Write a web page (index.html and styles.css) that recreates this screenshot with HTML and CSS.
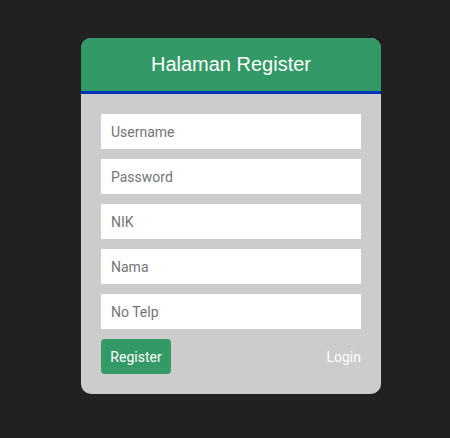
FILE: index.html
```html
<!DOCTYPE html>
<html>
<head>
<meta charset="utf-8">
<link rel="stylesheet" href="styles.css">
</head>
<body>
<div class="card">
  <div class="card-header">Halaman Register</div>
  <form class="card-body">
    <input class="field" type="text" placeholder="Username">
    <input class="field" type="password" placeholder="Password">
    <input class="field" type="text" placeholder="NIK">
    <input class="field" type="text" placeholder="Nama">
    <input class="field" type="text" placeholder="No Telp">
    <div class="actions">
      <button class="btn" type="button">Register</button>
      <a class="login" href="#">Login</a>
    </div>
  </form>
</div>
</body>
</html>
```
FILE: styles.css
```css
html, body {
  margin: 0;
  padding: 0;
}
body {
  background: #212121;
  width: 450px;
  height: 438px;
  font-family: "Liberation Sans", Arial, sans-serif;
  display: flex;
  justify-content: center;
  align-items: flex-start;
  padding-top: 38px;
  box-sizing: border-box;
}
.card {
  width: 300px;
  background: #cccccc;
  border-radius: 10px;
  overflow: hidden;
  margin-left: 12px;
}
.card-header {
  background: #339966;
  color: #ffffff;
  font-size: 20px;
  height: 53px;
  line-height: 52px;
  text-align: center;
  border-bottom: 3px solid #0033bb;
}
.card-body {
  margin: 0;
  padding: 20px;
  display: flex;
  flex-direction: column;
  gap: 10px;
}
.field {
  height: 35px;
  box-sizing: border-box;
  border: none;
  outline: none;
  padding: 0 10px;
  font-family: Roboto, "Liberation Sans", sans-serif;
  font-size: 14px;
  background: #ffffff;
  color: #333;
}
.field::placeholder {
  color: #757575;
}
.actions {
  display: flex;
  justify-content: space-between;
  align-items: center;
}
.btn {
  width: 70px;
  height: 35px;
  background: #339966;
  color: #ffffff;
  border: none;
  border-radius: 4px;
  font-family: Roboto, "Liberation Sans", sans-serif;
  font-size: 14px;
  padding: 0;
}
.login {
  color: #ffffff;
  text-decoration: none;
  font-family: Roboto, "Liberation Sans", sans-serif;
  font-size: 14px;
}
```
